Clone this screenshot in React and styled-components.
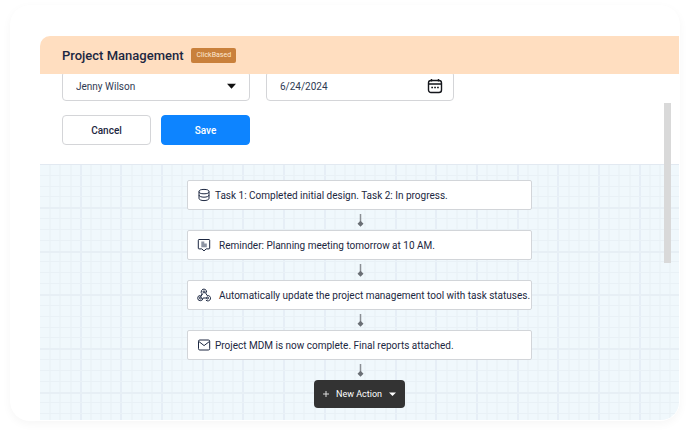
import React from 'react';
import styled, { createGlobalStyle } from 'styled-components';

const GlobalStyle = createGlobalStyle`
  * {
    box-sizing: border-box;
  }
  body {
    margin: 0;
    background: #ffffff;
    color: #1c2741;
    font-family: Roboto, "Liberation Sans", sans-serif;
  }
  button, input, select {
    font-family: inherit;
    color: inherit;
  }
`;

const tasks = [
  { icon: 'database', gap: 4, text: 'Task 1: Completed initial design. Task 2: In progress.' },
  { icon: 'note', gap: 8, text: 'Reminder: Planning meeting tomorrow at 10 AM.' },
  { icon: 'webhook', gap: 8, text: 'Automatically update the project management tool with task statuses.' },
  { icon: 'mail', gap: 4, text: 'Project MDM is now complete. Final reports attached.' },
];

const icons = {
  database: (
    <>
      <ellipse cx="7" cy="3.6" rx="5" ry="2.2" />
      <path d="M2 3.6v6.8c0 1.2 2.2 2.2 5 2.2s5-1 5-2.2V3.6M2 7c0 1.2 2.2 2.2 5 2.2s5-1 5-2.2" />
    </>
  ),
  note: (
    <>
      <path d="M2 1.5h10a.7.7 0 0 1 .7.7v8a.7.7 0 0 1-.7.7H9.2L7 12.900l-2.200-2H2a.7.7 0 0 1-.7-.7v-8a.7.7 0 0 1 .7-.7z" />
      <path d="M4.300 3.500h3v2h2.500v3.700H4.300z" fill="#8d94a3" stroke="none" />
    </>
  ),
  webhook: (
    <>
      <path d="M9.500 4.500A2.700 2.700 0 1 0 5.300 6L3.600 8.200M8.200 4.300l2 3.300a2.700 2.700 0 1 1-1.300 4.500M9.800 10H5.900a2.600 2.600 0 1 1-2.600-2.500M5.300 6l-1.900 3.300" />
      <circle cx="7" cy="3.900" r="1" />
      <circle cx="3.500" cy="10" r="1" />
      <circle cx="10.500" cy="10" r="1" />
    </>
  ),
  mail: (
    <>
      <rect x="1.500" y="2" width="11.200" height="10" rx="1.300" />
      <path d="M1.700 3.400 7.100 7.600l5.400-4.200" />
    </>
  ),
};

const range = (count) => Array.from({ length: count }, (_, i) => i);

// The paper is laid in sheets, so the first sheet ends before a full cell
const gridLines = (sheet, step, count) => [
  ...range(Math.ceil(sheet / step)).map((i) => ({ at: i * step, index: i })),
  ...range(count).map((i) => ({ at: sheet + i * step, index: i })),
];

const columns = gridLines(315, 10.17, 220).slice(1);
const rows = gridLines(141, 10.83, 100).slice(1);

const isMajor = (line) => line.index % 4 === 0 && line.index > 0;

const GridPaper = () => (
  <Paper aria-hidden="true">
    {columns.map((line) => (
      <rect
        key={line.at}
        x={Math.round(line.at) - 1}
        y="0"
        width="2"
        height="100%"
        fill={isMajor(line) ? '#e6eef6' : '#ecf4f8'}
      />
    ))}
    {rows.map((line) => (
      <rect
        key={line.at}
        x="0"
        y={Math.round(line.at) - 1}
        width="100%"
        height={isMajor(line) ? 2 : 1}
        fill={isMajor(line) ? '#e7eff5' : '#e9f1f6'}
      />
    ))}
  </Paper>
);

const Connector = () => (
  <ConnectorIcon viewBox="0 0 10 20" aria-hidden="true">
    <path d="M5.500 4v8" stroke="#8b8f94" strokeWidth="1.500" />
    <path d="M5.500 10.800 8.500 13.800l-3 3-3-3z" fill="#6a6f75" />
  </ConnectorIcon>
);

const TaskNode = ({ task }) => (
  <Node $gap={task.gap}>
    <NodeIcon viewBox="0 0 14 14" aria-hidden="true">
      {icons[task.icon]}
    </NodeIcon>
    {task.text}
  </Node>
);

const App = () => {
  return (
    <Page>
      <GlobalStyle />
      <Card>
        <Panel>
          <Header>
            <Title>Project Management</Title>
            <Badge>ClickBased</Badge>
          </Header>
          <Form onSubmit={(e) => e.preventDefault()}>
            <Fields>
              <Field>
                <Select aria-label="Assignee" defaultValue="jenny">
                  <option value="jenny">Jenny Wilson</option>
                </Select>
                <FieldIcon viewBox="0 0 16 16" aria-hidden="true">
                  <path d="M4 5.800h9L8.500 10.800z" fill="#111111" />
                </FieldIcon>
              </Field>
              <Field>
                <Input type="text" aria-label="Due date" defaultValue="6/24/2024" />
                <FieldIcon viewBox="0 0 16 16" aria-hidden="true">
                  <g fill="none" stroke="#15171c" strokeWidth="1.400">
                    <rect x="1.500" y="2.500" width="13" height="12" rx="2.500" />
                    <path d="M1.500 6h13M4.500 1v2.500M11.500 1v2.500" />
                    <path d="M4.300 9.500h1.700M7.200 9.500h1.700M10.100 9.500h1.700" strokeWidth="1.700" />
                  </g>
                </FieldIcon>
              </Field>
            </Fields>
            <Fields>
              <Actions>
                <Button type="button">Cancel</Button>
                <Button type="submit" $primary>Save</Button>
              </Actions>
            </Fields>
          </Form>
          <Canvas>
            <GridPaper />
            <Flow>
              {tasks.map((task) => (
                <React.Fragment key={task.icon}>
                  <TaskNode task={task} />
                  <Connector />
                </React.Fragment>
              ))}
              <NewAction type="button">
                <svg width="6" height="6" viewBox="0 0 6 6" aria-hidden="true">
                  <path d="M3 0v6M0 3h6" stroke="#dddddd" />
                </svg>
                New Action
                <svg width="7" height="4" viewBox="0 0 7 4" aria-hidden="true">
                  <path d="M0 .5h7L3.500 4z" fill="#ffffff" />
                </svg>
              </NewAction>
            </Flow>
          </Canvas>
          <ScrollThumb />
        </Panel>
      </Card>
    </Page>
  );
};

const Page = styled.div`
  display: flex;
  min-height: 100vh;
  padding: 5px 10px 14px;
`;

const Card = styled.div`
  display: flex;
  flex: 1;
  min-width: 0;
  padding: 31px 1px 1px 30px;
  border-radius: 20px;
  background: #ffffff;
  box-shadow: 0 3px 10px rgba(0, 0, 0, 0.04);
`;

const Panel = styled.main`
  position: relative;
  display: flex;
  flex-direction: column;
  flex: 1;
  min-width: 0;
  border-radius: 10px 0 18px 0;
  overflow: hidden;
`;

const Header = styled.header`
  display: flex;
  align-items: center;
  gap: 8px;
  height: 38px;
  padding: 0 22px;
  background: #ffdec0;
`;

const Title = styled.h1`
  margin: 0;
  font-size: 13px;
  font-weight: 500;
`;

const Badge = styled.span`
  padding: 0 5px;
  border-radius: 2px;
  background: #c9803b;
  color: #ffe9d2;
  font-size: 7px;
  line-height: 15px;
`;

// The first row is scrolled partly under the header
const Form = styled.form`
  display: flex;
  flex-direction: column;
  justify-content: flex-end;
  gap: 14px;
  height: 90px;
  padding: 0 22px 19px;
  overflow: hidden;
`;

const Fields = styled.div`
  display: grid;
  grid-template-columns: 1fr 1fr;
  flex: none;
  gap: 16px;
  width: 100%;
  max-width: 392px;
`;

const Field = styled.div`
  position: relative;
`;

const Select = styled.select`
  display: block;
  appearance: none;
  width: 100%;
  height: 30px;
  padding: 0 36px 0 13px;
  border: 1px solid #d4d5d8;
  border-radius: 4px;
  background: #ffffff;
  color: #2f3a52;
  font-size: 10px;
`;

const Input = styled(Select).attrs({ as: 'input' })``;

const FieldIcon = styled.svg`
  position: absolute;
  top: 7px;
  right: 11px;
  width: 16px;
  height: 16px;
  pointer-events: none;
`;

const Actions = styled.div`
  display: grid;
  grid-template-columns: 1fr 1fr;
  gap: 10px;
`;

const Button = styled.button`
  height: 30px;
  padding: 0;
  border: 1px solid ${(props) => (props.$primary ? '#0d84ff' : '#d4d5d8')};
  border-radius: 4px;
  background: ${(props) => (props.$primary ? '#0d84ff' : '#ffffff')};
  color: ${(props) => (props.$primary ? '#ffffff' : '#1c2741')};
  font-size: 10px;
  font-weight: 500;
`;

const Canvas = styled.section`
  position: relative;
  flex: 1;
  padding: 15px 16px 12px;
  border-top: 1px solid #e2e9f1;
  background: #f0f8fc;
`;

const Paper = styled.svg`
  position: absolute;
  inset: 0;
  width: 100%;
  height: 100%;
`;

const Flow = styled.div`
  position: relative;
  display: flex;
  flex-direction: column;
  align-items: center;
`;

const Node = styled.div`
  display: flex;
  align-items: center;
  gap: ${(props) => props.$gap}px;
  width: 100%;
  max-width: 345px;
  height: 30px;
  padding-left: 9px;
  border: 1px solid #d2d5d9;
  border-radius: 2px;
  background: #ffffff;
  font-size: 10px;
  white-space: nowrap;
`;

const NodeIcon = styled.svg`
  flex: none;
  width: 14px;
  height: 14px;
  fill: none;
  stroke: #1c2741;
  stroke-linejoin: round;
`;

const ConnectorIcon = styled.svg`
  width: 10px;
  height: 20px;
`;

const NewAction = styled.button`
  display: flex;
  align-items: center;
  justify-content: center;
  gap: 7px;
  height: 28px;
  padding: 0 9px;
  border: 0;
  border-radius: 4px;
  background: #333333;
  color: #ffffff;
  font-size: 9px;
`;

const ScrollThumb = styled.div`
  position: absolute;
  top: 67px;
  right: 8px;
  width: 7px;
  height: 160px;
  background: #d9d9d9;
`;

export default App;
